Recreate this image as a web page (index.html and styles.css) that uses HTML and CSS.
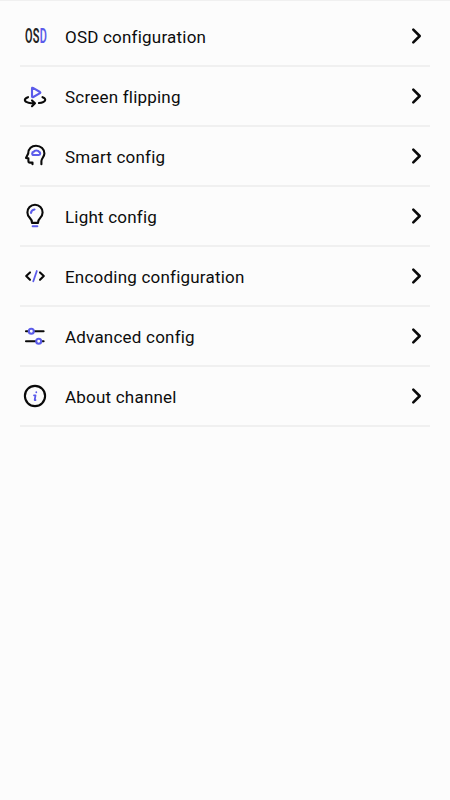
FILE: index.html
```html
<!DOCTYPE html>
<html lang="en">
<head>
<meta charset="utf-8">
<title>Channel settings</title>
<link rel="stylesheet" href="styles.css">
</head>
<body>
<svg class="defs" width="0" height="0"><symbol id="chevron" viewBox="0 0 16 20"><path d="M4.3 3.6 10.7 10 4.3 16.4"/></symbol></svg>
<ul class="menu">
  <li class="row">
    <span class="icon osd-box"><span class="osd">OS<span class="accent-text">D</span></span></span>
    <span class="label">OSD configuration</span><svg class="chevron"><use href="#chevron"/></svg>
  </li>
  <li class="row">
    <svg class="icon" viewBox="5 0 30 32"><path class="accent" d="M17 8.4 Q17 7.4 18 7.9 L25 12 Q25.8 12.6 25 13.2 L18.3 17 Q17 17.6 17 16.4Z"/><path d="M13 17.2C8.5 18.8 9 21.8 13.5 22.7Q16 23.2 19.6 23.3M17 20.4 20 23.3 17 26.2M27.5 17.2C32 19 31 22 24 23"/></svg>
    <span class="label">Screen flipping</span><svg class="chevron"><use href="#chevron"/></svg>
  </li>
  <li class="row">
    <svg class="icon" viewBox="5 0 30 32"><path d="M17.5 24.2V22.6H15Q13.4 22.6 13.4 21V18.4L11 17.9 13.2 13.6C13.2 8.5 16.8 5.8 21 5.8C26 5.8 29.4 9.3 29.4 13.6C29.4 17 26.4 18.3 26.4 21V24.2"/><path class="accent" d="M18.8 15Q17.2 15 17.2 13.5 17.2 12 18.7 11.8 19.2 10.5 21.3 10.5 23.5 10.5 24 11.8 25.2 12.2 25.2 13.6 25.2 15 23.8 15Z"/></svg>
    <span class="label">Smart config</span><svg class="chevron"><use href="#chevron"/></svg>
  </li>
  <li class="row">
    <svg class="icon" viewBox="5 -0.7 30 32"><path d="M17 22.2Q17 19.2 14.8 17.2A7.6 7.6 0 1 1 25.2 17.2Q23 19.2 23 22.2Z"/><path class="accent" d="M16 12.2Q16.3 9.3 19.5 8.8M17.7 25.6H22.3"/></svg>
    <span class="label">Light config</span><svg class="chevron"><use href="#chevron"/></svg>
  </li>
  <li class="row">
    <svg class="icon" viewBox="5 0 30 32"><path d="M15 12.4 11.2 16 15 19.8M25 12.4 28.8 16 25 19.8"/><path class="accent slash" d="M21.8 11 18.3 21.3"/></svg>
    <span class="label">Encoding configuration</span><svg class="chevron"><use href="#chevron"/></svg>
  </li>
  <li class="row">
    <svg class="icon" viewBox="5 0 30 32"><path d="M11 11.3H13M19.5 11.3H28.6M11 21.3H21M27.5 21.3H28.6"/><circle class="accent" cx="16.3" cy="11.3" r="2.5"/><circle class="accent" cx="23.7" cy="21.3" r="2.5"/></svg>
    <span class="label">Advanced config</span><svg class="chevron"><use href="#chevron"/></svg>
  </li>
  <li class="row">
    <svg class="icon" viewBox="5 0 30 32"><circle cx="20" cy="16" r="10.1"/><path class="accent slash" d="M21.3 12.2V12.3M19 15.3H20.5L19.7 20H20.5"/></svg>
    <span class="label">About channel</span><svg class="chevron"><use href="#chevron"/></svg>
  </li>
</ul>
</body>
</html>
```
FILE: styles.css
```css
* { box-sizing: border-box; }
body {
  margin: 0;
  min-height: 100vh;
  background: #fcfcfc;
  border-top: 1px solid #f0f0f0;
  font-family: Roboto, sans-serif;
  color: #0c0c0c;
}
.defs { display: block; }
.menu { list-style: none; margin: 0; padding: 6px 20px 0; }
.row {
  display: flex;
  align-items: center;
  height: 60px;
  border-bottom: 2px solid #f0f0f0;
}
.icon {
  width: 30px;
  height: 32px;
  margin-right: 15px;
  fill: none;
  stroke: #0a0a0a;
  stroke-width: 2.1;
  stroke-linecap: round;
  stroke-linejoin: round;
}
.accent { stroke: #5b5bea; }
.slash { stroke-width: 1.8; }
.osd-box { padding-left: 4.5px; }
.osd {
  display: inline-block;
  transform: scaleX(0.56);
  transform-origin: left center;
  font-size: 19.5px;
  font-weight: 600;
  line-height: 34px;
  letter-spacing: 0.4px;
  color: #222;
}
.accent-text { color: #5b5bea; }
.label {
  flex: 1;
  padding-top: 2px;
  font-size: 17px;
  line-height: 22px;
  letter-spacing: 0.21px;
  font-variant-ligatures: common-ligatures;
}
.chevron {
  width: 16px;
  height: 20px;
  margin-right: 5px;
  fill: none;
  stroke: #0a0a0a;
  stroke-width: 2.6;
  stroke-linecap: round;
  stroke-linejoin: round;
}
```
